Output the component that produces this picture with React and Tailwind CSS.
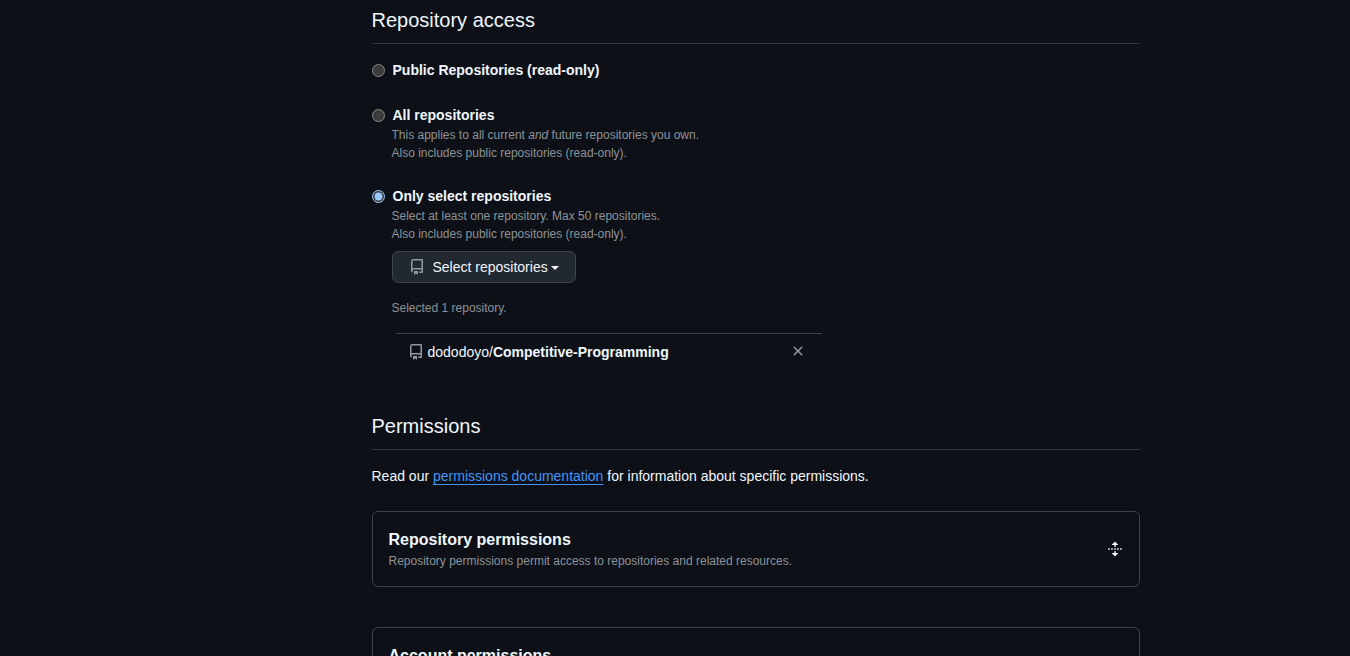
import { useState } from "react";

function Icon({ d, className = "" }) {
  return (
    <svg viewBox="0 0 16 16" width="16" height="16" fill="currentColor" aria-hidden="true" className={`shrink-0 ${className}`}>
      <path d={d} />
    </svg>
  );
}

const REPO =
  "M2 2.5A2.5 2.5 0 0 1 4.5 0h8.75a.75.75 0 0 1 .75.75v12.5a.75.75 0 0 1-.75.75h-2.5a.75.75 0 0 1 0-1.5h1.75v-2h-8a1 1 0 0 0-.714 1.7.75.75 0 1 1-1.072 1.05A2.495 2.495 0 0 1 2 11.5Zm10.5-1h-8a1 1 0 0 0-1 1v6.708A2.486 2.486 0 0 1 4.5 9h8ZM5 12.25a.25.25 0 0 1 .25-.25h3.5a.25.25 0 0 1 .25.25v3.25a.25.25 0 0 1-.4.2l-1.45-1.087a.249.249 0 0 0-.3 0L5.4 15.7a.25.25 0 0 1-.4-.2Z";
const CLOSE =
  "M3.72 3.72a.75.75 0 0 1 1.06 0L8 6.94l3.22-3.22a.749.749 0 0 1 1.275.326.749.749 0 0 1-.215.734L9.06 8l3.22 3.22a.749.749 0 0 1-.326 1.275.749.749 0 0 1-.734-.215L8 9.06l-3.22 3.22a.751.751 0 0 1-1.042-.018.751.751 0 0 1-.018-1.042L6.94 8 3.72 4.78a.75.75 0 0 1 0-1.06Z";
const UNFOLD =
  "m8.177.677 2.896 2.896a.25.25 0 0 1-.177.427H8.75v1.25a.75.75 0 0 1-1.5 0V4H5.104a.25.25 0 0 1-.177-.427L7.823.677a.25.25 0 0 1 .354 0ZM7.25 10.75a.75.75 0 0 1 1.5 0V12h2.146a.25.25 0 0 1 .177.427l-2.896 2.896a.25.25 0 0 1-.354 0l-2.896-2.896A.25.25 0 0 1 5.104 12H7.25v-1.25Zm-5-2a.75.75 0 0 0 0-1.5h-.5a.75.75 0 0 0 0 1.5h.5ZM6 8a.75.75 0 0 1-.75.75h-.5a.75.75 0 0 1 0-1.5h.5A.75.75 0 0 1 6 8Zm2.25.75a.75.75 0 0 0 0-1.5h-.5a.75.75 0 0 0 0 1.5h.5ZM12 8a.75.75 0 0 1-.75.75h-.5a.75.75 0 0 1 0-1.5h.5A.75.75 0 0 1 12 8Zm2.25.75a.75.75 0 0 0 0-1.5h-.5a.75.75 0 0 0 0 1.5h.5Z";

function SectionHeading({ children }) {
  return <h2 className="border-b border-[#30363d] pb-2 text-xl leading-[30px]">{children}</h2>;
}

function AccessOption({ id, label, value, onSelect, children }) {
  return (
    <div>
      <div className="flex items-center gap-2">
        <input
          type="radio"
          id={id}
          name="access"
          checked={value === id}
          onChange={() => onSelect(id)}
          className="size-[13px] shrink-0"
        />
        <label htmlFor={id} className="font-bold">
          {label}
        </label>
      </div>
      {children && <div className="pl-5">{children}</div>}
    </div>
  );
}

function Hint({ children }) {
  return <p className="text-xs leading-[18px] text-[#8d9197]">{children}</p>;
}

function PermissionCard({ title, description }) {
  return (
    <section className="flex items-center justify-between rounded-md border border-[#3d444d] p-4">
      <div>
        <h3 className="text-base font-bold">{title}</h3>
        <Hint>{description}</Hint>
      </div>
      <button type="button" aria-label={`Expand ${title}`}>
        <Icon d={UNFOLD} />
      </button>
    </section>
  );
}

export default function App() {
  const [access, setAccess] = useState("selected");
  return (
    <div className="h-screen overflow-hidden bg-[#0d1117] font-['Liberation_Sans',Arial,sans-serif] text-sm leading-[21px] text-[#f0f6fc] scheme-dark">
      <main className="mx-auto max-w-[931px] pt-[5px] pr-px pl-[162px]">
        <SectionHeading>Repository access</SectionHeading>
        <div className="flex flex-col gap-6 pt-4">
          <AccessOption id="public" label="Public Repositories (read-only)" value={access} onSelect={setAccess} />
          <AccessOption id="all" label="All repositories" value={access} onSelect={setAccess}>
            <Hint>
              This applies to all current <em>and</em> future repositories you own.
              <br />
              Also includes public repositories (read-only).
            </Hint>
          </AccessOption>
          <AccessOption id="selected" label="Only select repositories" value={access} onSelect={setAccess}>
            <Hint>
              Select at least one repository. Max 50 repositories.
              <br />
              Also includes public repositories (read-only).
            </Hint>
            <button
              type="button"
              className="mt-2 mb-4 flex h-8 items-center rounded-md border border-[#3d444d] bg-[#212830] px-4"
            >
              <Icon d={REPO} className="mr-2 text-[#9198a1]" />
              Select repositories
              <span className="mt-px ml-[3px] border-x-4 border-t-4 border-x-transparent border-t-current" />
            </button>
            <Hint>Selected 1 repository.</Hint>
            <ul className="mt-4 ml-1 max-w-[426px] border-t border-[#3d444d]">
              <li className="flex items-center px-3 pt-2 pb-[9px] leading-5">
                <Icon d={REPO} className="mr-1 text-[#9198a1]" />
                <span>
                  dododoyo/<strong>Competitive-Programming</strong>
                </span>
                <button type="button" aria-label="Remove repository" className="mr-1 ml-auto self-start pt-px text-[#9198a1]">
                  <Icon d={CLOSE} />
                </button>
              </li>
            </ul>
          </AccessOption>
        </div>
        <div className="pt-10">
          <SectionHeading>Permissions</SectionHeading>
          <p className="py-4">
            Read our{" "}
            <a href="#permissions" className="text-[#4493f8] underline underline-offset-3">
              permissions documentation
            </a>{" "}
            for information about specific permissions.
          </p>
        </div>
        <div className="flex flex-col gap-10 pt-2">
          <PermissionCard
            title="Repository permissions"
            description="Repository permissions permit access to repositories and related resources."
          />
          <PermissionCard
            title="Account permissions"
            description="User permissions permit access to resources under your personal GitHub account."
          />
        </div>
      </main>
    </div>
  );
}
